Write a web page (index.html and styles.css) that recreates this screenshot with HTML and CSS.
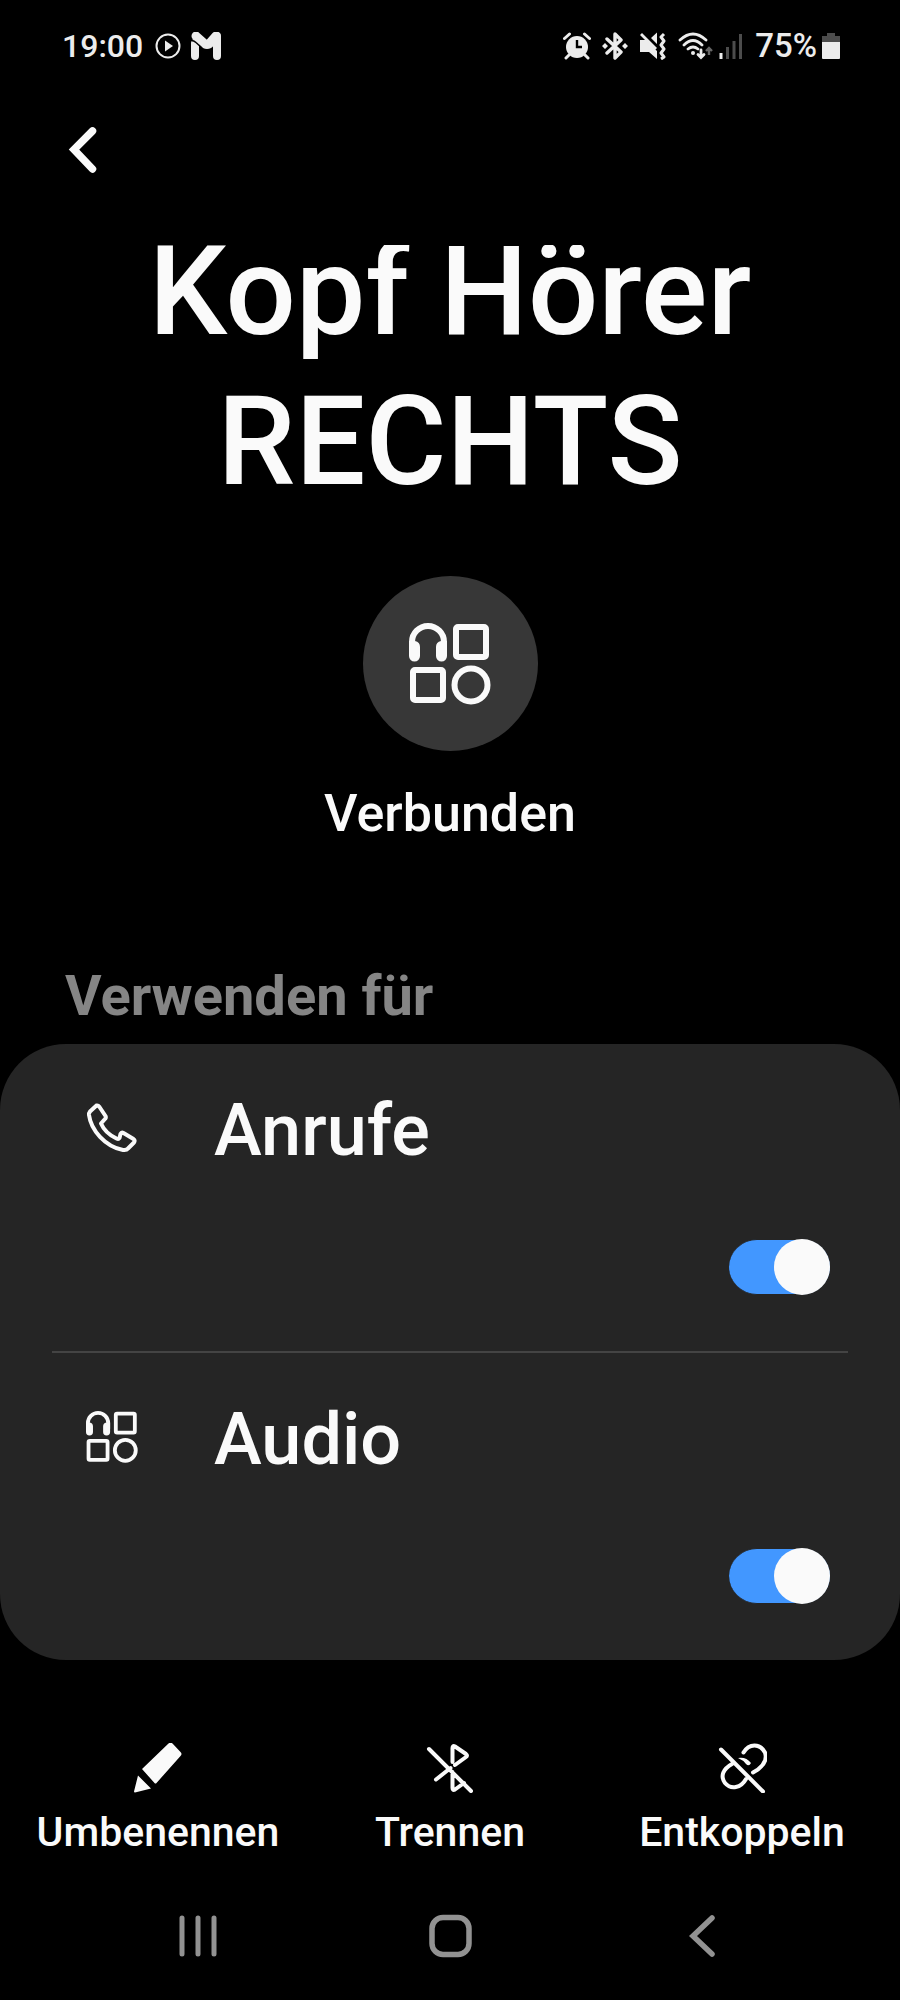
FILE: index.html
```html
<!DOCTYPE html>
<html lang="de">
<head>
<meta charset="utf-8">
<meta name="viewport" content="width=device-width, initial-scale=1">
<title>Kopf Hörer RECHTS</title>
<link rel="stylesheet" href="styles.css">
</head>
<body>
<svg class="sprite" aria-hidden="true">
  <symbol id="audio-device" viewBox="0 0 82 82">
    <g fill="none" stroke="currentColor" stroke-width="6">
      <path d="M3 28V19a16 16 0 0 1 32 0v9"/>
      <rect x="47" y="4" width="30" height="30" rx="2"/>
      <rect x="4" y="47" width="30" height="30" rx="2"/>
      <circle cx="62" cy="62" r="16.500"/>
    </g>
    <path fill="currentColor" d="M0 18h6q5 1 5 6v9a5.500 5.500 0 0 1-11 0zM38 18h-6q-5 1-5 6v9a5.500 5.500 0 0 0 11 0z"/>
  </symbol>
</svg>

<header class="status">
  <div class="status-side">
    <time class="clock">19:00</time>
    <svg class="ico-play" viewBox="0 0 26 26"><circle cx="13" cy="13" r="11.500" fill="none" stroke="currentColor" stroke-width="2"/><path fill="currentColor" d="M10 7.500v11l8-5.500z"/></svg>
    <svg class="ico-mail" viewBox="0 0 30 28"><path d="M4 11v13M26 24V4" fill="none" stroke="currentColor" stroke-width="8" stroke-linecap="round"/><path d="M5 4l9 8q2 1 4 0l7-8" fill="none" stroke="currentColor" stroke-width="9" stroke-linecap="round" stroke-linejoin="round"/><path d="M0 8.500q3 0 5 2l6 5.500" fill="none" stroke="#000" stroke-width="1.500"/></svg>
  </div>
  <div class="status-side">
    <div class="status-icons">
      <svg class="ico-alarm" viewBox="0 0 28 28"><circle cx="14" cy="15" r="11" fill="currentColor"/><path d="M1.500 6.500l5-4.500M26.500 6.500l-5-4.500M6 23l-3 3M22 23l3 3" stroke="currentColor" stroke-width="3" stroke-linecap="round"/><path d="M14 8v7h5" fill="none" stroke="#000" stroke-width="2.400"/></svg>
      <svg class="ico-bt" viewBox="0 0 26 28"><path d="M5 7l14 13-6 6V2l6 6L5 21" fill="none" stroke="currentColor" stroke-width="3.400" stroke-linejoin="round" stroke-linecap="round"/><path d="M0 14l3-3 3 3-3 3zM20 14l3-3 3 3-3 3z" fill="currentColor"/></svg>
      <svg class="ico-mute" viewBox="0 0 28 28"><path fill="currentColor" d="M1 8h6l11 11v8l-8-7H1zM12 6l6-5.500V12z"/><path d="M2 2l15 15" stroke="currentColor" stroke-width="2.800"/><path d="M25 2l-3 3 3 4-3 4 3 4-3 4 3 4-3 2" fill="none" stroke="currentColor" stroke-width="3" stroke-linejoin="round"/></svg>
      <svg class="ico-wifi" viewBox="0 0 36 28"><g fill="none" stroke="currentColor" stroke-width="2.800" stroke-linecap="round"><path d="M2 8q13-12 26 0M6 13q9-9 18 0M10 17q5-4 10 0"/><path d="M23 18v7m-3-2.500l3 3 3-3"/></g><circle cx="15" cy="21" r="2" fill="currentColor"/><path d="M31 23v-7m-3 3l3-3 3 3" fill="none" stroke="#666" stroke-width="2.400"/></svg>
      <svg class="ico-signal" viewBox="0 0 24 26"><path d="M2 20v6" stroke="currentColor" stroke-width="3"/><path d="M8.500 14v12M15 8v18M21.500 1v25" stroke="#4c4c4c" stroke-width="3"/></svg>
    </div>
    <span class="percent">75%</span>
    <svg class="ico-battery" viewBox="0 0 18 28"><path fill="#4c4c4c" d="M5 1h8v3h5v7H0V4h5z"/><path fill="currentColor" d="M0 10h18v16q0 1-1 1H1q-1 0-1-1z"/></svg>
  </div>
</header>

<div class="toolbar">
  <button class="back" type="button" aria-label="Zurück"><svg viewBox="0 0 30 48"><path d="M24.500 5L6 23.500l18.500 19.500" fill="none" stroke="currentColor" stroke-width="7.500" stroke-linecap="round"/></svg></button>
</div>

<main class="content">
  <div class="title-window"><h1 class="title">Kopf Hörer<br>RECHTS</h1></div>
  <div class="device-badge"><svg class="device-icon"><use href="#audio-device"/></svg></div>
  <p class="state">Verbunden</p>

  <h2 class="section-title">Verwenden für</h2>
  <section class="card">
    <label class="row">
      <span class="row-head">
        <svg class="row-icon" viewBox="0 0 52 52"><path d="M10.500 3.500Q12 3 13.500 5l6 9q1 2-1 3.500l-3.500 4c3 7 8 11.500 15.500 15q2 1 3-.500l1-4q1-2 3-1l10 6q2 1.500.500 3.500l-6 6q-1.500 2-5 1.500C19 44.500 5 28 3 13q-.200-2 1-3.500z" fill="none" stroke="currentColor" stroke-width="4" stroke-linejoin="round"/></svg>
        <span class="row-label">Anrufe</span>
      </span>
      <input class="switch" type="checkbox" role="switch" checked>
    </label>
    <label class="row">
      <span class="row-head">
        <svg class="row-icon"><use href="#audio-device"/></svg>
        <span class="row-label">Audio</span>
      </span>
      <input class="switch" type="checkbox" role="switch" checked>
    </label>
  </section>
</main>

<div class="actions">
  <button class="action" type="button">
    <svg viewBox="0 0 50 50"><path fill="currentColor" d="M9 26L35.500 .500q2-1.500 4 0l8 8.500q2 2 0 4L23.500 40q-1 1-2 0zM5 32.500L18 45.500 2 49.500q-1 0-1-1z"/></svg>
    <span>Umbenennen</span>
  </button>
  <button class="action" type="button">
    <svg viewBox="0 0 50 50"><path d="M4 6l42 42M11 36.500L25.500 25M27.500 19V5q0-3 2.500-1.500L41 11q2 1.500 0 3L30 22M27.500 29v16q0 3 2.500 1.500l9-6.500" fill="none" stroke="currentColor" stroke-width="4" stroke-linecap="round" stroke-linejoin="round"/></svg>
    <span>Trennen</span>
  </button>
  <button class="action" type="button">
    <svg viewBox="0 0 50 50"><path d="M4 6.500l42 42M26.500 9.500C32 0 43 0 48 9.500c3 9-3 15-12 20M15 21C6 26 3 33 8 40c6 7 16 5 21-4" fill="none" stroke="currentColor" stroke-width="4" stroke-linecap="round"/><path d="M21 15q8-1.500 13 5-2 4-5 1-3-4-8-6z" fill="currentColor"/></svg>
    <span>Entkoppeln</span>
  </button>
</div>

<nav class="sysnav">
  <button type="button" aria-label="Letzte Apps"><svg viewBox="0 0 44 44"><path d="M6 4v36M22 4v36M38 4v36" stroke="currentColor" stroke-width="5" stroke-linecap="round"/></svg></button>
  <button type="button" aria-label="Startbildschirm"><svg viewBox="0 0 44 44"><rect x="4" y="3.500" width="37" height="37" rx="11" fill="none" stroke="currentColor" stroke-width="5.500"/></svg></button>
  <button type="button" aria-label="Zurück"><svg viewBox="0 0 44 44"><path d="M32 4L13 22l19 18" fill="none" stroke="currentColor" stroke-width="5.500" stroke-linecap="round"/></svg></button>
</nav>
</body>
</html>
```
FILE: styles.css
```css
* { box-sizing: border-box; }

body {
  margin: 0;
  background: #000;
  color: #fafafa;
  font-family: Roboto, "Noto Sans", sans-serif;
  font-weight: 500;
}

h1, h2, p { margin: 0; font-weight: 500; }
svg { display: block; flex: none; }

button {
  border: 0;
  padding: 0;
  background: none;
  color: inherit;
  font: inherit;
  cursor: pointer;
}

.sprite { position: absolute; width: 0; height: 0; }

/* Status bar */
.status {
  display: flex;
  justify-content: space-between;
  align-items: center;
  height: 92px;
  padding: 0 60px 0 62px;
  color: #ececec;
  font-size: 33px;
  line-height: 40px;
}
.status-side { display: flex; align-items: center; }
.clock { font-size: 32px; }
.ico-play { width: 26px; height: 26px; margin: 0 10px 0 12px; }
.ico-mail { width: 30px; height: 28px; }
.status-icons { display: flex; align-items: center; gap: 11px; margin-right: 12px; }
.ico-alarm, .ico-mute { width: 28px; height: 28px; }
.ico-bt { width: 26px; height: 28px; }
.ico-wifi { width: 36px; height: 28px; margin-right: -6px; }
.ico-signal { width: 24px; height: 26px; }
.ico-battery { width: 18px; height: 28px; margin-left: 5px; }

/* Toolbar */
.toolbar {
  display: flex;
  align-items: flex-start;
  height: 153px;
  padding: 34px 68px 0;
}
.back svg { width: 30px; height: 48px; }

.title-window { overflow: hidden; }
.title {
  margin-top: -28px;
  padding-bottom: 28px;
  font-size: 124px;
  line-height: 150px;
  text-align: center;
}
.device-badge {
  display: grid;
  place-items: center;
  width: 175px;
  height: 175px;
  margin: 31px auto 33px;
  border-radius: 50%;
  background: #373737;
}
.device-icon { width: 82px; height: 82px; }
.state { font-size: 52px; line-height: 60px; text-align: center; }

/* Profile list */
.section-title {
  padding: 0 65px;
  margin: 119px 0 15px;
  color: #858585;
  font-size: 56px;
  line-height: 66px;
  font-weight: 700;
}
.card { border-radius: 66px; background: #252525; padding: 0 52px; }
.row {
  display: flex;
  flex-direction: column;
  gap: 66px;
  padding: 45px 18px 56px 34px;
}
.row + .row { border-top: 2px solid #444; }
.row-head { display: flex; align-items: center; gap: 76px; }
.row-icon { width: 52px; height: 52px; margin-bottom: 6px; }
.row-label { font-size: 72px; line-height: 84px; }

.switch {
  appearance: none;
  align-self: flex-end;
  display: flex;
  align-items: center;
  width: 101px;
  height: 56px;
  margin: 0;
  border: solid #252525;
  border-width: 1px 0;
  border-radius: 28px;
  background: #666;
}
.switch::before {
  content: "";
  flex: none;
  width: 56px;
  height: 56px;
  border-radius: 50%;
  background: #fafafa;
}
.switch:checked { justify-content: flex-end; background: #4297ff; }

/* Bottom actions */
.actions {
  display: grid;
  grid-template-columns: repeat(3, 1fr);
  padding: 83px 12px 0;
}
.action {
  display: flex;
  flex-direction: column;
  align-items: center;
  gap: 15px;
  font-size: 41px;
  line-height: 48px;
}
.action svg { width: 50px; height: 50px; }

.sysnav {
  display: grid;
  grid-template-columns: repeat(3, 1fr);
  padding: 58px 72px 41px;
  color: #929292;
}
.sysnav button { display: grid; place-items: center; }
.sysnav svg { width: 44px; height: 44px; }
```
